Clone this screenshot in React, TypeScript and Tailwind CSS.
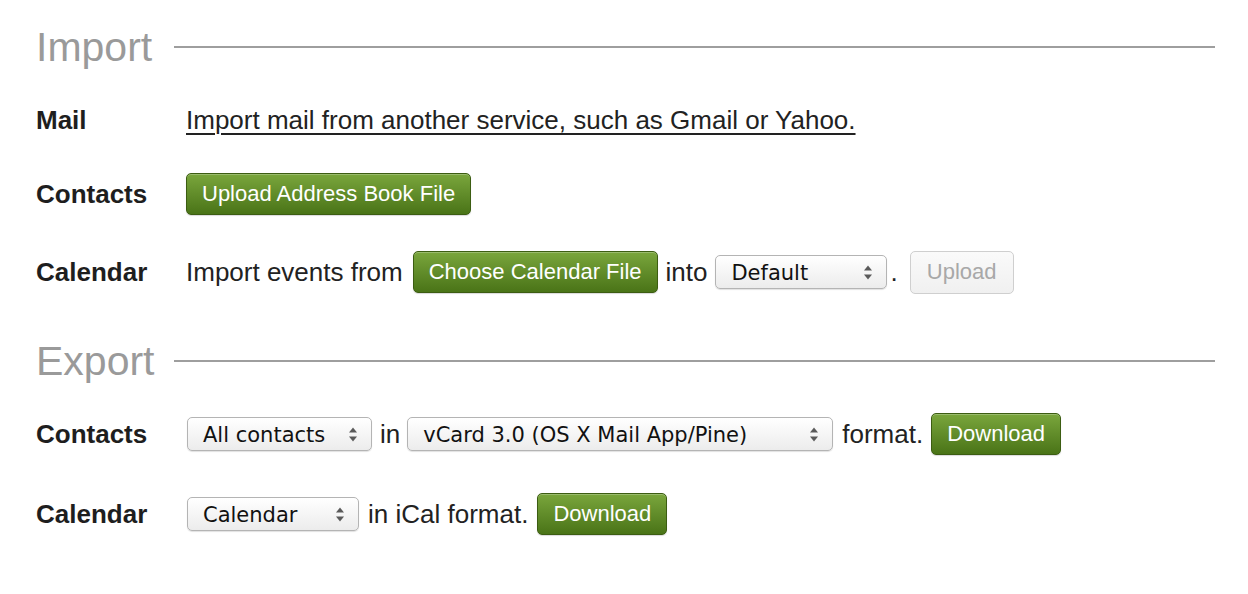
import React from "react";

const SANS = "font-['Liberation_Sans',Arial,sans-serif]";

function Heading({ title, gap }: { title: string; gap: string }) {
  return (
    <div className="flex items-center h-[50px]">
      <h2 className="text-[41px] leading-none text-[#9a9a9a] font-light">{title}</h2>
      <div className={`flex-1 h-[2px] bg-[#9e9e9e] ${gap}`} />
    </div>
  );
}

function Row({ label, children, className = "" }: { label: string; children: React.ReactNode; className?: string }) {
  return (
    <div className={`flex items-center h-[48px] ${className}`}>
      <div className="w-[150px] shrink-0 text-[26px] font-bold text-[#1e1e1e]">{label}</div>
      <div className="flex items-center text-[26px] text-[#222]">{children}</div>
    </div>
  );
}

function GreenButton({ children, className = "" }: { children: React.ReactNode; className?: string }) {
  return (
    <button className={`h-[42px] px-[15px] rounded-[5px] border border-[#3c5d12] bg-gradient-to-b from-[#7aa63c] to-[#4a7417] text-white text-[22px] leading-none shadow-[inset_0_1px_0_rgba(255,255,255,0.25),0_1px_1px_rgba(0,0,0,0.15)] ${className}`}>
      {children}
    </button>
  );
}

function Select({ value, width }: { value: string; width: string }) {
  return (
    <div className={`${width} h-[34px] flex items-center justify-between pl-[15px] pr-[13px] pt-[2px] rounded-[5px] border border-[#b4b4b4] bg-gradient-to-b from-white to-[#ececec] shadow-[0_1px_1px_rgba(0,0,0,0.12)] font-['DejaVu_Sans',sans-serif] text-[21px] text-[#111] leading-none`}>
      <span>{value}</span>
      <svg width="10" height="17" viewBox="0 0 10 17" className="-mt-[2px]">
        <path d="M5 1.5 L9 6.5 H1 Z" fill="#5a5a5a" />
        <path d="M5 15.5 L9 10.5 H1 Z" fill="#5a5a5a" />
      </svg>
    </div>
  );
}

export default function App() {
  return (
    <div className={`${SANS} bg-white w-[1248px] h-[594px] pl-[36px] pr-[33px] pt-[22px]`}>
      <Heading title="Import" gap="ml-[22px]" />

      <Row label="Mail" className="mt-[24px]">
        <a href="#" className="underline decoration-[1.5px] underline-offset-[4px] text-[#222]">
          Import mail from another service, such as Gmail or Yahoo.
        </a>
      </Row>

      <Row label="Contacts" className="mt-[26px]">
        <GreenButton>Upload Address Book File</GreenButton>
      </Row>

      <Row label="Calendar" className="mt-[30px]">
        <span>Import events from</span>
        <GreenButton className="ml-[10px] px-[14px]">Choose Calendar File</GreenButton>
        <span className="ml-[8px]">into</span>
        <div className="ml-[8px]">
          <Select value="Default" width="w-[172px]" />
        </div>
        <span className="ml-[3px]">.</span>
        <button className="ml-[12px] h-[43px] w-[104px] rounded-[5px] border border-[#cfcfcf] bg-gradient-to-b from-[#fafafa] to-[#f0f0f0] text-[22px] text-[#a8a8a8] leading-none">
          Upload
        </button>
      </Row>

      <div className="mt-[40px]">
        <Heading title="Export" gap="ml-[19px]" />
      </div>

      <Row label="Contacts" className="mt-[24px]">
        <div className="ml-[1px]">
          <Select value="All contacts" width="w-[185px]" />
        </div>
        <span className="ml-[8px]">in</span>
        <div className="ml-[7px]">
          <Select value="vCard 3.0 (OS X Mail App/Pine)" width="w-[426px]" />
        </div>
        <span className="ml-[9px]">format.</span>
        <GreenButton className="ml-[8px]">Download</GreenButton>
      </Row>

      <Row label="Calendar" className="mt-[32px]">
        <div className="ml-[1px]">
          <Select value="Calendar" width="w-[172px]" />
        </div>
        <span className="ml-[9px]">in iCal format.</span>
        <GreenButton className="ml-[9px]">Download</GreenButton>
      </Row>
    </div>
  );
}
